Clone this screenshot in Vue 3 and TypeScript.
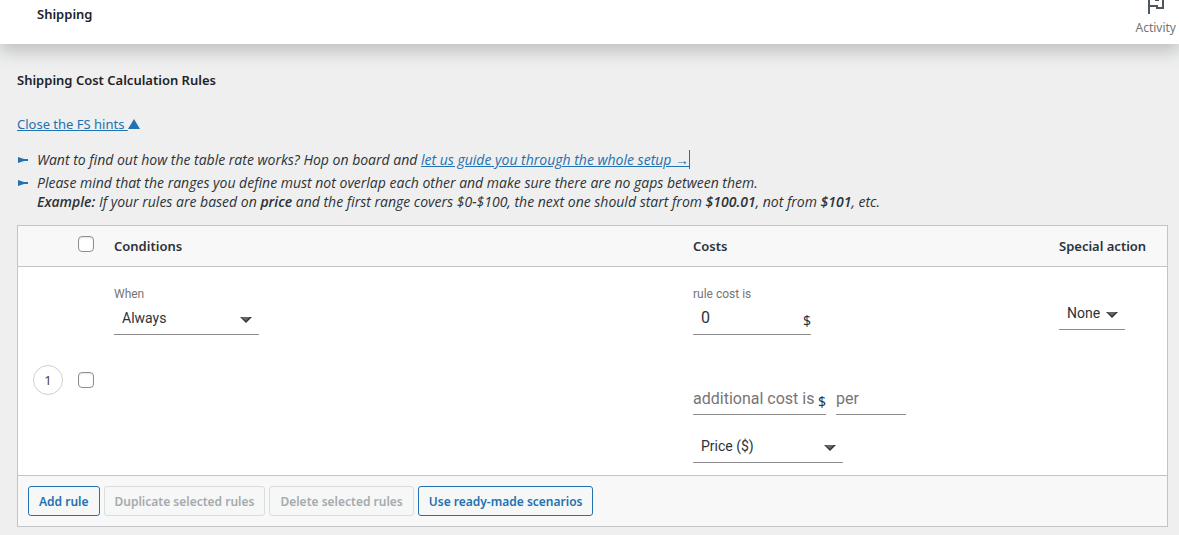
<script setup lang="ts">
import { ref } from 'vue'

const allSelected = ref(false)
const ruleSelected = ref(false)
const condition = ref('Always')
const ruleCost = ref('0')
const additionalCost = ref('')
const per = ref('')
const basis = ref('Price ($)')
const action = ref('None')
</script>

<template>
  <div class="page">
    <header class="topbar">
      <h1>Shipping</h1>
      <button type="button" class="activity">
        <svg width="24" height="24" viewBox="0 0 24 24" fill="none" stroke="#50575e" aria-hidden="true">
          <path d="M5 24V5" stroke-width="2" />
          <path d="M5 5h7v4h7v9h-6v-2H5M12 9v1h3" stroke-width="2" />
        </svg>
        <span>Activity</span>
      </button>
    </header>

    <main>
      <h2>Shipping Cost Calculation Rules</h2>
      <a class="toggle" href="#hints">Close the FS hints
        <svg width="12" height="10" viewBox="0 0 12 10" aria-hidden="true"><path d="M6 0l6 10H0z" fill="#2271b1" /></svg></a>

      <ul id="hints" class="hints">
        <li>
          <svg class="marker" width="10" height="6" viewBox="0 0 10 6" aria-hidden="true"><path d="M0 0l6 2h4v2H6L0 6z" fill="#2271b1" /></svg>
          <span>Want to find out how the table rate works? Hop on board and <a class="guide" href="#guide">let us guide you through the whole setup →</a></span>
        </li>
        <li>
          <svg class="marker" width="10" height="6" viewBox="0 0 10 6" aria-hidden="true"><path d="M0 0l6 2h4v2H6L0 6z" fill="#2271b1" /></svg>
          <span>Please mind that the ranges you define must not overlap each other and make sure there are no gaps between them.<br />
            <strong>Example:</strong> If your rules are based on <strong>price</strong> and the first range covers $0-$100, the next one should start from <strong>$100.01</strong>, not from <strong>$101</strong>, etc.</span>
        </li>
      </ul>

      <table class="rules">
        <thead>
          <tr>
            <th class="col-number"></th>
            <th class="col-check"><input v-model="allSelected" type="checkbox" aria-label="Select all rules" /></th>
            <th>Conditions</th>
            <th class="col-costs">Costs</th>
            <th class="col-action">Special action</th>
          </tr>
        </thead>
        <tbody>
          <tr>
            <td class="col-number centred"><span class="number">1</span></td>
            <td class="col-check centred"><input v-model="ruleSelected" type="checkbox" aria-label="Select rule 1" /></td>
            <td>
              <div class="field when">
                <label for="condition">When</label>
                <div class="control">
                  <select id="condition" v-model="condition"><option>Always</option></select>
                  <svg class="arrow" width="12" height="6" viewBox="0 0 12 6" aria-hidden="true"><path d="M0 0h12L6 6z" fill="#333" /><path d="M1 0h9L6 4z" fill="#666" /></svg>
                </div>
              </div>
            </td>
            <td>
              <div class="field cost">
                <label for="rule-cost">rule cost is</label>
                <div class="control">
                  <input id="rule-cost" v-model="ruleCost" type="text" />
                  <span class="unit">$</span>
                </div>
              </div>
              <div class="extra">
                <div class="inline additional">
                  <label for="additional">additional cost is</label>
                  <input id="additional" v-model="additionalCost" type="text" />
                  <span class="unit">$</span>
                </div>
                <div class="inline per">
                  <label for="per">per</label>
                  <input id="per" v-model="per" type="text" />
                </div>
              </div>
              <div class="control basis">
                <select v-model="basis" aria-label="Cost basis"><option>Price ($)</option></select>
                <svg class="arrow" width="12" height="6" viewBox="0 0 12 6" aria-hidden="true"><path d="M0 0h12L6 6z" fill="#333" /><path d="M1 0h9L6 4z" fill="#666" /></svg>
              </div>
            </td>
            <td>
              <div class="control action">
                <select v-model="action" aria-label="Special action"><option>None</option></select>
                <svg class="arrow" width="12" height="6" viewBox="0 0 12 6" aria-hidden="true"><path d="M0 0h12L6 6z" fill="#333" /><path d="M1 0h9L6 4z" fill="#666" /></svg>
              </div>
            </td>
          </tr>
        </tbody>
        <tfoot>
          <tr>
            <td colspan="5">
              <div class="buttons">
                <button type="button">Add rule</button>
                <button type="button" disabled>Duplicate selected rules</button>
                <button type="button" disabled>Delete selected rules</button>
                <button type="button">Use ready-made scenarios</button>
              </div>
            </td>
          </tr>
        </tfoot>
      </table>
    </main>
  </div>
</template>

<style>
body {
  margin: 0;
  background: #efefef;
}
</style>

<style scoped>
* {
  box-sizing: border-box;
}
.page {
  font-family: "Noto Sans", "Open Sans", sans-serif;
  font-size: 13px;
  color: #2c3338;
}
.topbar {
  display: flex;
  justify-content: space-between;
  height: 44px;
  padding: 0 3px 0 37px;
  background: #fff;
  box-shadow: 0 8px 16px 0 rgba(85, 93, 102, 0.3);
}
h1,
h2 {
  margin: 0;
  font-size: 13px;
  line-height: 20px;
  font-weight: 600;
  color: #1d2327;
}
h1 {
  padding-top: 4px;
}
.activity {
  display: flex;
  flex-direction: column;
  align-items: center;
  justify-content: flex-end;
  padding: 0 0 8px;
  border: 0;
  background: none;
  font: 12px/16px "Noto Sans", sans-serif;
  color: #757575;
}
.activity svg {
  flex: none;
  margin-bottom: 6px;
}
main {
  padding: 26px 11px 8px 17px;
}
a {
  color: #2271b1;
}
.toggle {
  display: inline-block;
  margin-top: 24px;
  line-height: 20px;
}
.hints {
  display: flex;
  flex-direction: column;
  gap: 4px;
  margin: 16px 0 14px;
  padding: 0;
  list-style: none;
  font-family: "Open Sans", "Noto Sans", sans-serif;
  font-size: 14px;
  font-style: italic;
  line-height: 19px;
}
.hints li {
  display: flex;
  gap: 9px;
}
.hints strong {
  font-weight: 600;
}
.marker {
  flex: none;
  margin: 7px 0 0 1px;
}
.guide {
  border-right: 1px solid #2271b1;
}
.rules {
  width: 100%;
  table-layout: fixed;
  border: 1px solid #c3c4c7;
  border-collapse: separate;
  border-spacing: 0;
  background: #fff;
}
th,
td {
  padding: 0;
  text-align: left;
  vertical-align: top;
}
th {
  height: 41px;
  border-bottom: 1px solid #c3c4c7;
  background: #f8f8f8;
  font-weight: 600;
  vertical-align: middle;
}
.col-number {
  width: 60px;
  padding-left: 15px;
}
.col-check {
  width: 36px;
}
.col-costs {
  width: 366px;
}
.col-action {
  width: 108px;
}
tbody td {
  height: 208px;
  padding-top: 20px;
}
tbody .centred {
  padding-top: 17px;
  vertical-align: middle;
}
.number {
  display: flex;
  align-items: center;
  justify-content: center;
  width: 30px;
  height: 30px;
  border: 1px solid #ccd0d4;
  border-radius: 50%;
  color: #50403a;
}
input[type="checkbox"] {
  display: block;
  appearance: none;
  width: 16px;
  height: 16px;
  margin: 0;
  border: 1px solid #8c8f94;
  border-radius: 4px;
  background: #fff;
  box-shadow: inset 0 1px 2px rgba(0, 0, 0, 0.1);
}
th input[type="checkbox"] {
  margin-bottom: 4px;
}
.field label {
  display: block;
  font: 12px/14px Roboto, sans-serif;
  color: #757575;
}
.control {
  position: relative;
  display: flex;
  align-items: center;
  height: 34px;
  border-bottom: 1px solid #8c8c8c;
}
select,
.control input,
.inline input {
  appearance: none;
  width: 100%;
  min-width: 0;
  height: 32px;
  margin: 0;
  padding: 0 8px;
  border: 0;
  background: none;
  font: 14px/32px Roboto, sans-serif;
  color: #2c3338;
}
.control input {
  padding-top: 1px;
  font-size: 16px;
}
.arrow {
  position: absolute;
  right: 7px;
  bottom: 11px;
  pointer-events: none;
}
.unit {
  padding-top: 6px;
  font-size: 14px;
}
.when {
  width: 145px;
}
.cost {
  width: 118px;
}
.extra {
  display: flex;
  gap: 10px;
  margin-top: 48px;
}
.inline {
  display: grid;
  grid-template-columns: 1fr auto;
  align-items: center;
  height: 32px;
  border-bottom: 1px solid #8c8c8c;
}
.inline label {
  grid-area: 1 / 1;
  font: 16px/20px Roboto, sans-serif;
  color: #757575;
  white-space: nowrap;
}
.inline input {
  grid-area: 1 / 1;
  height: 31px;
  padding: 0;
}
.additional {
  width: 133px;
}
.per {
  width: 70px;
}
.basis {
  width: 150px;
  margin-top: 14px;
}
.action {
  width: 66px;
  margin-top: 9px;
}
tfoot td {
  border-top: 1px solid #c3c4c7;
  background: #f8f8f8;
}
.buttons {
  display: flex;
  flex-wrap: wrap;
  gap: 4px;
  padding: 10px;
}
.buttons button {
  height: 30px;
  padding: 1px 10px 0;
  border: 1px solid #2271b1;
  border-radius: 3px;
  background: #f6f7f7;
  font: 600 12px/28px "Noto Sans", sans-serif;
  color: #2271b1;
}
.buttons button:disabled {
  border-color: #dcdcde;
  color: #a7aaad;
}
</style>
